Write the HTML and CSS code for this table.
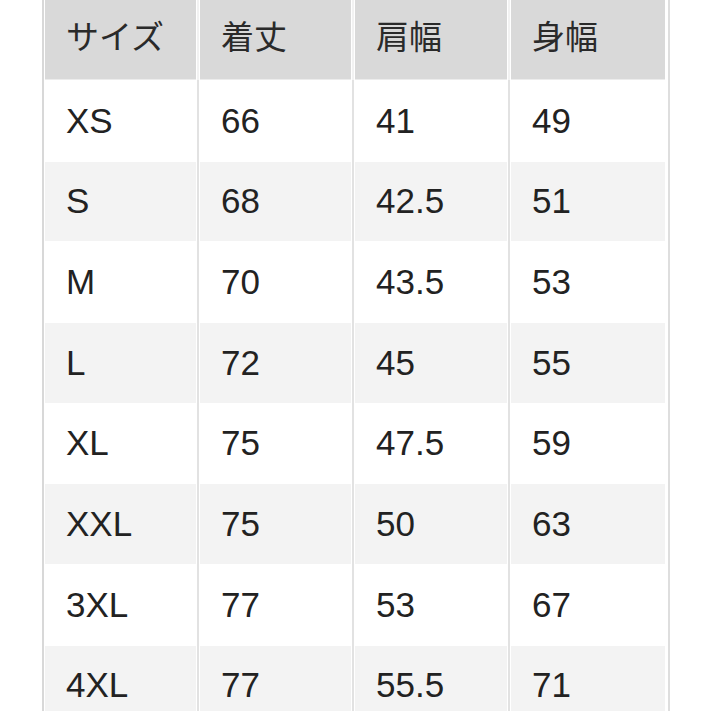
FILE: index.html
```html
<!DOCTYPE html>
<html lang="ja">
<head>
<meta charset="utf-8">
<title>サイズ表</title>
<link rel="stylesheet" href="styles.css">
</head>
<body>
<table class="size-table">
  <colgroup>
    <col class="c1"><col class="c2"><col class="c3"><col class="c4">
  </colgroup>
  <thead>
    <tr class="head-row">
      <th>サイズ</th><th>着丈</th><th>肩幅</th><th>身幅</th>
    </tr>
  </thead>
  <tbody>
    <tr class="row"><td>XS</td><td>66</td><td>41</td><td>49</td></tr>
    <tr class="row alt"><td>S</td><td>68</td><td>42.5</td><td>51</td></tr>
    <tr class="row"><td>M</td><td>70</td><td>43.5</td><td>53</td></tr>
    <tr class="row alt"><td>L</td><td>72</td><td>45</td><td>55</td></tr>
    <tr class="row"><td>XL</td><td>75</td><td>47.5</td><td>59</td></tr>
    <tr class="row alt"><td>XXL</td><td>75</td><td>50</td><td>63</td></tr>
    <tr class="row"><td>3XL</td><td>77</td><td>53</td><td>67</td></tr>
    <tr class="row alt"><td>4XL</td><td>77</td><td>55.5</td><td>71</td></tr>
  </tbody>
</table>
</body>
</html>
```
FILE: styles.css
```css
html, body {
  margin: 0;
  padding: 0;
  background: #ffffff;
  overflow: hidden;
}

body {
  font-family: "Liberation Sans", Arial, "Noto Sans CJK JP", sans-serif;
  color: #222222;
}

.size-table {
  margin: -4px 0 0 42px;
  width: 628px;
  table-layout: fixed;
  border-collapse: separate;
  border-spacing: 0;
  border-left: 2px solid #d8d8d8;
  border-right: 2px solid #dedede;
}

.c1 { width: 155px; }
.c2 { width: 155px; }
.c3 { width: 156px; }
.c4 { width: 158px; }

.size-table th,
.size-table td {
  box-sizing: border-box;
  padding: 0 0 0 22px;
  text-align: left;
  vertical-align: middle;
  white-space: nowrap;
  border-right: 2px solid #e2e2e2;
  box-shadow: inset -1px 0 0 #ffffff, inset 1px 0 0 #ffffff;
}

.size-table th:last-child,
.size-table td:last-child {
  border-right: 2px solid #ffffff;
}

.head-row {
  height: 84px;
}

.head-row th {
  background: #d9d9d9;
  font-family: "Noto Sans CJK JP", sans-serif;
  font-weight: 400;
  font-size: 33px;
  color: #2a2a2a;
  padding-bottom: 6px;
  border-right-color: #f2f2f2;
  box-shadow: inset -1px 0 0 #ffffff, inset 1px 0 0 #ffffff, inset 0 -1px 0 #ececec;
}

.row {
  height: 80.67px;
}

.row td {
  background: #ffffff;
  font-size: 35px;
  padding-top: 1px;
}

.row.alt td {
  background: #f3f3f3;
  box-shadow: inset -1px 0 0 #ffffff, inset 1px 0 0 #ffffff, inset 0 1px 0 #ffffff;
}
```
